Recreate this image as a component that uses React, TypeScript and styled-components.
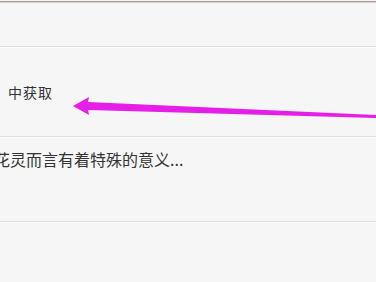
import styled, { createGlobalStyle } from "styled-components";

const Global = createGlobalStyle`
  html, body {
    margin: 0;
    padding: 0;
    background: #f6f6f6;
  }
  #root {
    width: 376px;
    height: 282px;
    overflow: hidden;
  }
`;

const Page = styled.div`
  position: relative;
  width: 376px;
  height: 282px;
  display: flex;
  flex-direction: column;
  background: #f6f6f6;
  font-family: "Noto Sans CJK SC", "Noto Sans", sans-serif;
  color: #333;
  overflow: hidden;
`;

const TopEdge = styled.div`
  height: 1px;
  margin-top: 1px;
  background: #a59e99;
  border-bottom: 1px solid #d8d2ce;
`;

const Row = styled.div<{ $h: number; $top?: number; $last?: boolean }>`
  height: ${(p) => p.$h}px;
  box-sizing: border-box;
  display: flex;
  align-items: ${(p) => (p.$top !== undefined ? "flex-start" : "center")};
  padding-top: ${(p) => p.$top ?? 0}px;
  border-bottom: ${(p) => (p.$last ? "none" : "1px solid #dedede")};
  box-shadow: ${(p) => (p.$last ? "none" : "0 1px 0 #fbfbfb")};
  overflow: hidden;
`;

const Title = styled.span<{ $size: number; $indent: number; $spacing?: number }>`
  font-size: ${(p) => p.$size}px;
  margin-left: ${(p) => p.$indent}px;
  letter-spacing: ${(p) => p.$spacing ?? 0}px;
  white-space: nowrap;
  line-height: 1;
`;

const Overlay = styled.svg`
  position: absolute;
  left: 0;
  top: 0;
  pointer-events: none;
`;

export default function App() {
  return (
    <>
      <Global />
      <Page>
        <TopEdge />
        <Row $h={44} />
        <Row $h={90}>
          <Title $size={14} $indent={8} $spacing={1}>
            中获取
          </Title>
        </Row>
        <Row $h={85} $top={14}>
          <Title $size={16} $indent={-6}>
            花灵而言有着特殊的意义...
          </Title>
        </Row>
        <Row $h={60} $last />
        <Overlay width="376" height="282" viewBox="0 0 376 282">
          <polygon
            points="73,106 89,97 88,102 376,115 376,118 88,110 89,115"
            fill="#e51fe8"
          />
        </Overlay>
      </Page>
    </>
  );
}
